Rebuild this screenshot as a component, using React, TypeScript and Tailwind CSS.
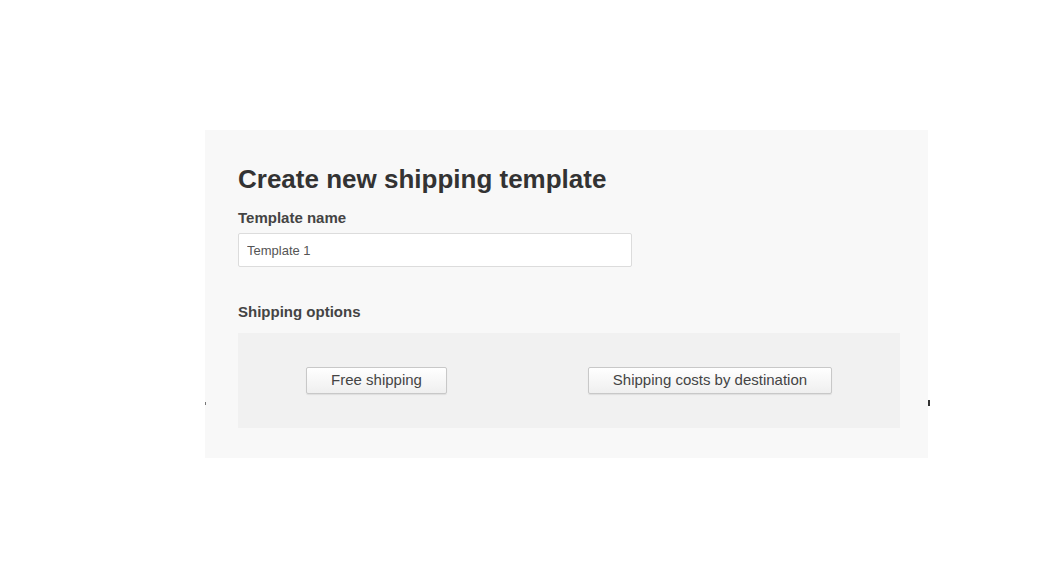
const App = () => {
  return (
    <div
      className="w-[1064px] h-[567px] bg-white pt-[130px] pl-[205px]"
      style={{ fontFamily: '"Liberation Sans", Arial, sans-serif' }}
    >
      <div className="relative w-[723px] h-[328px] bg-[#f8f8f8] pt-[33px] pl-[33px] pr-[28px]">
        <span className="absolute left-0 top-[272px] w-px h-[3px] bg-[#777]" />
        <span className="absolute right-[-2px] top-[270px] w-[2px] h-[6px] bg-[#333]" />
        <h1 className="text-[26px] leading-[32px] font-bold text-[#333]">
          Create new shipping template
        </h1>
        <label className="block mt-[14px] text-[15px] leading-[18px] font-bold text-[#444]">
          Template name
        </label>
        <input
          type="text"
          defaultValue="Template 1"
          className="block mt-[6px] w-[394px] h-[34px] bg-white border border-[#dcdcdc] rounded-[2px] px-[8px] text-[13px] text-[#555] outline-none"
        />
        <h2 className="mt-[36px] text-[15px] leading-[18px] font-bold text-[#444]">
          Shipping options
        </h2>
        <div className="mt-[12px] h-[95px] bg-[#f1f1f1] flex items-center justify-between px-[68px]">
          <button className="w-[141px] h-[27px] border border-[#c8c8c8] rounded-[2px] bg-gradient-to-b from-white to-[#efefef] shadow-[0_1px_1px_rgba(0,0,0,0.08)] text-[15px] text-[#444]">
            Free shipping
          </button>
          <button className="w-[244px] h-[27px] border border-[#c8c8c8] rounded-[2px] bg-gradient-to-b from-white to-[#efefef] shadow-[0_1px_1px_rgba(0,0,0,0.08)] text-[15px] text-[#444]">
            Shipping costs by destination
          </button>
        </div>
      </div>
    </div>
  );
};

export default App;
